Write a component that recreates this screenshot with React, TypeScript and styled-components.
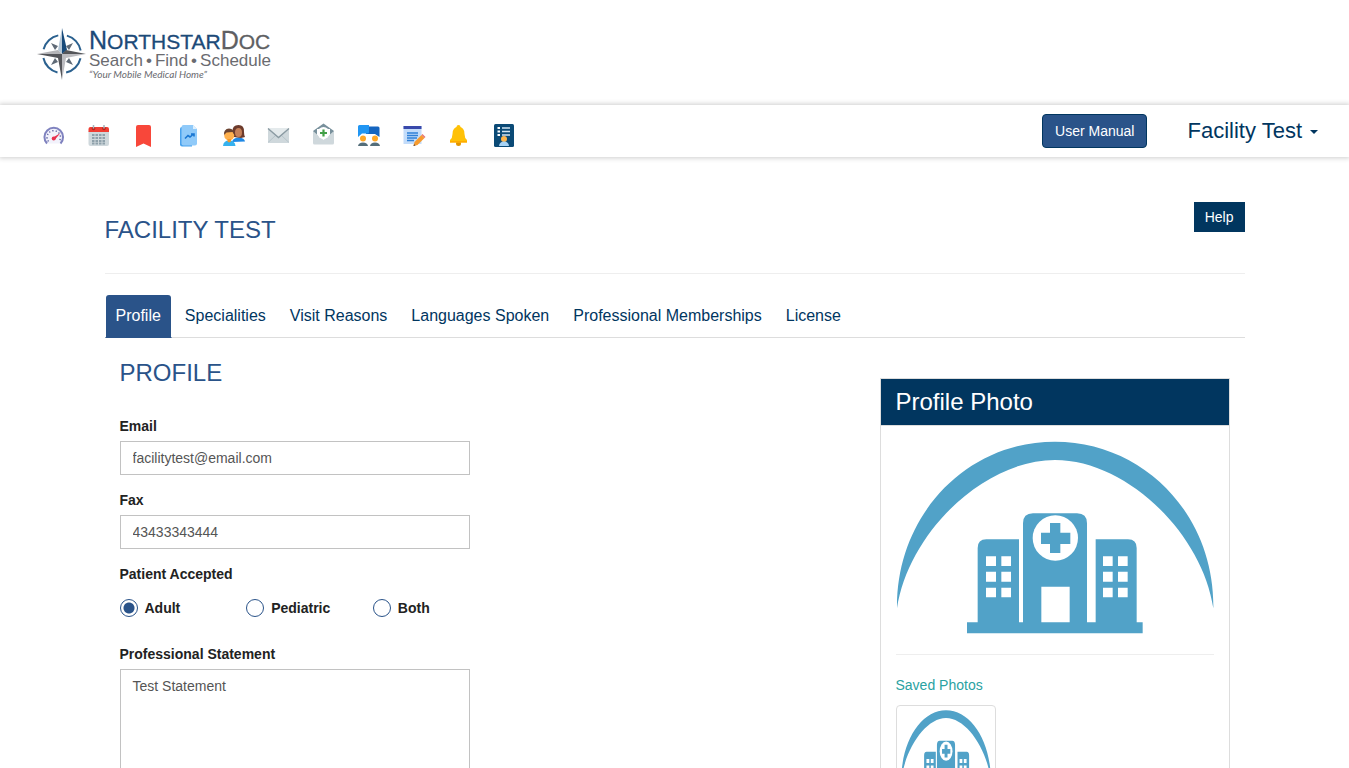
import React, { useState } from "react";
import styled, { createGlobalStyle } from "styled-components";

const navy = "#01365f";
const blue = "#2a5389";
const sky = "#51a2c8";

const GlobalStyle = createGlobalStyle`
  *, *::before, *::after { box-sizing: border-box; }
  body {
    margin: 0;
    background: #fff;
    color: #222;
    font: 14px/20px "Liberation Sans", Arial, sans-serif;
  }
  h1, h2, h3, ul, fieldset, legend { margin: 0; padding: 0; font-weight: 400; }
  fieldset { border: 0; min-width: 0; }
  button, input, textarea { font: inherit; }
  a { text-decoration: none; }
`;

const Header = styled.header`
  display: flex;
  align-items: center;
  height: 105px;
  padding: 3px 37px 0;
`;

const Brand = styled.a`
  display: flex;
  align-items: center;
  gap: 3px;
  color: #6a6b70;
`;

const BrandText = styled.div`
  display: flex;
  flex-direction: column;
  width: 182px;
`;

const BrandName = styled.div`
  font-size: 21px;
  line-height: 21px;
  color: #5e5f63;
  white-space: nowrap;
  -webkit-text-stroke: 0.3px currentColor;
`;

const BrandBlue = styled.span`
  color: #1c4a78;
`;

const BrandCap = styled.span`
  font-size: 25px;
`;

const BrandWords = styled.div`
  display: flex;
  justify-content: space-between;
  font-size: 17px;
  line-height: 17px;
`;

const BrandTag = styled.div`
  font: italic 10px/10px Lato, "Liberation Sans", sans-serif;
  white-space: nowrap;
`;

const Toolbar = styled.nav`
  display: flex;
  align-items: center;
  justify-content: space-between;
  height: 52px;
  padding: 0 31px 0 42px;
  background: #fff;
  box-shadow: 0 0 5px 1px rgba(0, 0, 0, 0.2);
`;

const IconList = styled.ul`
  display: flex;
  gap: 21px;
  padding-top: 8px;
  list-style: none;
`;

const IconLink = styled.a`
  display: block;
  svg { display: block; }
`;

const Account = styled.div`
  display: flex;
  align-items: center;
  gap: 40px;
`;

const ManualButton = styled.button`
  height: 34px;
  padding: 0 12px;
  border: 1px solid ${navy};
  border-radius: 4px;
  background: ${blue};
  color: #fff;
`;

const AccountButton = styled.button`
  display: flex;
  align-items: center;
  gap: 8px;
  padding: 0;
  border: 0;
  background: none;
  color: ${navy};
  font-size: 22px;
  line-height: 28px;
`;

const Caret = styled.span`
  margin-top: 2px;
  border: 4px solid transparent;
  border-top-color: currentColor;
  border-bottom: 0;
`;

const Main = styled.main`
  max-width: 1170px;
  margin: 0 auto;
  padding: 45px 15px 0;
`;

const TitleRow = styled.div`
  display: flex;
  justify-content: space-between;
  align-items: flex-start;
  height: 72px;
  border-bottom: 1px solid #eee;
`;

const Title = styled.h1`
  padding-top: 14px;
  font-size: 24px;
  line-height: 28px;
  color: ${blue};
`;

const HelpButton = styled.button`
  height: 30px;
  padding: 0 11px;
  border: 0;
  background: ${navy};
  color: #fff;
`;

const Tabs = styled.div`
  display: flex;
  gap: 2px;
  margin-top: 20px;
  border-bottom: 1px solid #ddd;
`;

const Tab = styled.button<{ $active: boolean }>`
  height: 44px;
  margin-bottom: -1px;
  padding: 0 10px;
  border: 1px solid transparent;
  border-bottom-color: ${(p) => (p.$active ? blue : "transparent")};
  border-radius: 4px 4px 0 0;
  background: ${(p) => (p.$active ? blue : "none")};
  background-clip: padding-box;
  color: ${(p) => (p.$active ? "#fff" : navy)};
  font-size: 16px;
`;

const Content = styled.div`
  display: grid;
  grid-template-columns: repeat(3, 1fr);
  column-gap: 30px;
  align-items: start;
  padding: 20px 15px 0;
`;

const Form = styled.form`
  display: flex;
  flex-direction: column;
  gap: 15px;
`;

const SectionTitle = styled.h2`
  margin-bottom: 13px;
  font-size: 24px;
  line-height: 30px;
  color: ${blue};
`;

const Field = styled.div`
  display: flex;
  flex-direction: column;
  gap: 5px;
`;

const Label = styled.label`
  font-weight: 700;
`;

const Input = styled.input`
  height: 34px;
  padding: 0 12px;
  border: 1px solid #c2c2c2;
  color: #555;
`;

const TextArea = styled.textarea`
  display: block;
  width: 100%;
  padding: 6px 12px;
  border: 1px solid #c2c2c2;
  color: #555;
  resize: none;
`;

const Legend = styled.legend`
  margin-bottom: 14px;
  font-weight: 700;
`;

const Radios = styled.div`
  display: grid;
  grid-template-columns: repeat(3, 1fr);
  margin-right: -30px;
  padding-bottom: 11px;
`;

const RadioLabel = styled.label`
  display: flex;
  align-items: center;
  gap: 7px;
  font-weight: 700;
`;

const Radio = styled.input`
  appearance: none;
  width: 18px;
  height: 18px;
  margin: 0;
  border: 1px solid ${blue};
  border-radius: 50%;
  &:checked { background: radial-gradient(circle, ${blue} 5px, #fff 6px); }
`;

const Panel = styled.section`
  grid-column: 3;
  margin-top: 20px;
  border: 1px solid #ddd;
`;

const PanelTitle = styled.h3`
  padding: 10px 15px;
  background: ${navy};
  color: #fff;
  font-size: 24px;
  line-height: 26px;
  border-bottom: 1px solid #ddd;
`;

const PanelBody = styled.div`
  padding: 15px;
`;

const Photo = styled.div`
  padding-bottom: 20px;
  border-bottom: 1px solid #eee;
  svg { display: block; width: 100%; height: auto; }
`;

const SavedTitle = styled.div`
  padding: 20px 0 10px;
  color: #2aa2a2;
`;

const Thumb = styled.button`
  display: flex;
  align-items: flex-start;
  width: 100px;
  height: 100px;
  padding: 4px;
  border: 1px solid #ddd;
  border-radius: 4px;
  background: #fff;
  svg { width: 90px; height: 82px; }
`;

const Compass = () => (
  <svg width="49" height="52" viewBox="0 0 49 52" aria-hidden="true">
    <circle cx="25" cy="26" r="19" fill="none" stroke="#2b618f" strokeWidth="2" strokeDasharray="21 8.845" strokeDashoffset="-4.420" />
    <path d="M14 15L21 18L18 22ZM36 15L29 18L32 22ZM14 37L21 34L18 30ZM36 37L29 34L32 30Z" fill="#5f6a76" />
    <path d="M25 0L21 22L25 26Z" fill="#b4c6d6" />
    <path d="M25 0L30 22L25 26Z" fill="#174a7a" />
    <path d="M0 26L21 22L25 26Z" fill="#b5b5b8" />
    <path d="M0 26L21 30L25 26ZM49 26L29 22L25 26ZM25 52L21 30L25 26Z" fill="#55565a" />
    <path d="M49 26L29 30L25 26ZM25 52L29 30L25 26Z" fill="#bcbcc0" />
  </svg>
);

const Hospital = ({ stretch = false }: { stretch?: boolean }) => (
  <svg viewBox="78 213 954 579" preserveAspectRatio={stretch ? "none" : undefined} aria-hidden="true">
    <g fill={sky}>
      <path d="M81 715C78 435 290 215 555 215C822 215 1034 435 1030 715C996 490 770 270 555 270C340 270 115 490 81 715Z" />
      <path d="M323 757V534Q323 508 349 508H447V757H459V460Q459 430 489 430H621Q651 430 651 460V757H677V508H774Q800 508 800 534V757H818V790H291V757Z" />
    </g>
    <circle cx="556" cy="504" r="68" fill="#fff" />
    <path d="M540 459H571V488H601V522H571V549H540V522H513V488H540Z" fill={sky} />
    <path
      fill="#fff"
      d="M514 650H599V757H514ZM348 559h30v29h-30zM394 559h29v29h-29zM348 605h30v30h-30zM394 605h29v30h-29zM348 653h30v29h-30zM394 653h29v29h-29zM699 559h29v29h-29zM744 559h29v29h-29zM699 605h29v30h-29zM744 605h29v30h-29zM699 653h29v29h-29zM744 653h29v29h-29z"
    />
  </svg>
);

const icons: { name: string; art: React.ReactNode }[] = [
  {
    name: "Dashboard",
    art: (
      <>
        <path d="M5 20.5A9.3 9.3 0 1 1 18.500 20.500" fill="#f2f2fb" stroke="#7f82bf" strokeWidth="2" />
        <path d="M6.500 18.500A6.700 6.700 0 1 1 17 18.500" fill="none" stroke="#6b6ea8" strokeWidth="1.500" strokeDasharray="1.300 2" />
        <path d="M11 14.500L18.500 10L13 16.500Z" fill="#e8314f" />
        <circle cx="11.700" cy="15.500" r="2" fill="#e8314f" />
      </>
    ),
  },
  {
    name: "Calendar",
    art: (
      <>
        <path d="M1.500 8H22V21Q22 23 20 23H3.500Q1.500 23 1.500 21Z" fill="#cfd8dc" />
        <path d="M1.500 9V6Q1.500 4 3.500 4H20Q22 4 22 6V9Z" fill="#f03d33" />
        <circle cx="6.500" cy="5.500" r="1.800" fill="#b3261e" />
        <circle cx="17" cy="5.500" r="1.800" fill="#b3261e" />
        <path d="M6.500 2V5.500M17 2V5.500" stroke="#a9b7be" strokeWidth="1.500" />
        <path d="M5 12h14M5 15h14M5 18h14M5 20.500h14" stroke="#8fa1ab" strokeWidth="2" strokeDasharray="2.500 1" />
      </>
    ),
  },
  { name: "Bookmarks", art: <path d="M4 4Q4 2 6 2H17Q19 2 19 4V24L11.500 20.500L4 24Z" fill="#f8473a" /> },
  {
    name: "Reports",
    art: (
      <>
        <path d="M3 6Q3 4 5 4H15V23.500H5Q3 23.500 3 21.500Z" fill="#49a3ee" />
        <path d="M4.500 4Q4.500 2 6.500 2H16L20 6V20.500Q20 22.500 18 22.500H6.500Q4.500 22.500 4.500 20.500Z" fill="#90caf9" />
        <path d="M16 2L20 6H16Z" fill="#dff0fd" />
        <path d="M8 15.500L11 12.500L13 14L16.500 11M14 11H17V13.500" fill="none" stroke="#1976d2" strokeWidth="1.600" />
      </>
    ),
  },
  {
    name: "Patients",
    art: (
      <>
        <path d="M10 19Q11 14.500 17 14.500Q22.500 15 23 18.500Z" fill="#1e88e5" />
        <path d="M10.500 9Q10 2 16.500 2Q22.500 2 22 9Q22 12 23 14L19 15L12 14Z" fill="#6d3b2c" />
        <ellipse cx="16.500" cy="9.500" rx="3.500" ry="4.500" fill="#c68058" />
        <path d="M1 23Q1.500 17.500 7 17.500Q13 17.500 13.500 23Z" fill="#35b2ef" />
        <circle cx="7.200" cy="12.500" r="5" fill="#ffb04c" />
        <path d="M2 12Q1.500 6 7 5.500Q12.500 6 12.400 12L10.500 9L4.500 9.500Z" fill="#6b4331" />
        <path d="M5.500 16H9V18.500L7 19.500L5.500 18.500Z" fill="#f59827" />
      </>
    ),
  },
  {
    name: "Messages",
    art: (
      <>
        <rect x="1" y="5" width="21" height="15" rx="1" fill="#cfd8dc" />
        <path d="M1 19.500L8.500 12.500M22 19.500L14.500 12.500" stroke="#b7c4ca" />
        <path d="M1 5H22L11.500 14.500Z" fill="#e4eaec" />
        <path d="M1 5.500L11.500 14.500L22 5.500" fill="none" stroke="#8b9ba3" strokeWidth="1.400" />
      </>
    ),
  },
  {
    name: "Medical mail",
    art: (
      <>
        <path d="M1 8L11.500 0.500L22 8V20H1Z" fill="#78909c" />
        <path d="M5 6H18V15L11.500 18.500L5 15Z" fill="#fff" />
        <path d="M1 8L11.500 17L22 8V20Q22 21.500 20.500 21.500H2.500Q1 21.500 1 20Z" fill="#cfd8dc" />
        <circle cx="11.500" cy="10" r="6" fill="#fff" />
        <path d="M11.500 6.500V13.500M8 10H15" stroke="#43a047" strokeWidth="2.200" />
      </>
    ),
  },
  {
    name: "Discussions",
    art: (
      <>
        <path d="M9 3.500H21Q22.500 3.500 22.500 5V14L18 11H9Z" fill="#1565c0" />
        <path d="M1 3.500Q1 2 2.500 2H12V9Q12 10.500 10.500 10.500H5L1 14Z" fill="#2196f3" />
        <circle cx="6" cy="15.500" r="3" fill="#ffa726" />
        <circle cx="18" cy="15.500" r="3" fill="#ffa726" />
        <path d="M1 23Q1.500 19.500 6 19.500Q10.500 19.500 11 23ZM13 23Q13.500 19.500 18 19.500Q22.500 19.500 23 23Z" fill="#546e7a" />
      </>
    ),
  },
  {
    name: "Notes",
    art: (
      <>
        <rect x="1.500" y="3" width="18" height="18" fill="#c3dcfa" />
        <rect x="1.500" y="3" width="18" height="3" fill="#3949ab" />
        <path d="M5 10H16M5 12.500H16M5 15H15M5 17.500H12" stroke="#2f80d8" strokeWidth="1.500" />
        <path d="M12.500 19L19.500 12L22.500 15L15.500 22L11.500 23Z" fill="#f79b2e" />
        <path d="M19.500 12L20.500 11L23.500 14L22.500 15Z" fill="#e57373" />
        <path d="M12 21L13.500 22.500L11.500 23Z" fill="#5d4037" />
      </>
    ),
  },
  {
    name: "Notifications",
    art: (
      <>
        <circle cx="11.500" cy="20.500" r="2.500" fill="#e29500" />
        <circle cx="11.500" cy="4" r="2" fill="#ffc107" />
        <path d="M11.500 3.500Q17.500 4 17.500 11Q17.500 15 20 17V19.500H3V17Q5.500 15 5.500 11Q5.500 4 11.500 3.500Z" fill="#ffc107" />
        <path d="M3 18H20V19.500H3Z" fill="#ffab00" />
      </>
    ),
  },
  {
    name: "Directory",
    art: (
      <>
        <rect x="2" y="1" width="20" height="23" rx="1.500" fill="#0b4a76" />
        <path d="M5.500 5H8M5.500 8.500H8M5.500 12H8" stroke="#fff" strokeWidth="1.800" />
        <path d="M10 5H18M10 8.500H18M10 12H18" stroke="#d4e6f3" strokeWidth="1.600" />
        <circle cx="12" cy="16" r="3" fill="#ffb64c" />
        <path d="M7 23Q7.500 18.500 12 18.500Q16.500 18.500 17 23Z" fill="#a7d3f5" />
      </>
    ),
  },
];

const tabs = ["Profile", "Specialities", "Visit Reasons", "Languages Spoken", "Professional Memberships", "License"];
const patientTypes = ["Adult", "Pediatric", "Both"];

export default function App() {
  const [tab, setTab] = useState("Profile");
  return (
    <>
      <GlobalStyle />
      <Header>
        <Brand href="#home">
          <Compass />
          <BrandText>
            <BrandName>
              <BrandBlue><BrandCap>N</BrandCap>ORTHSTAR</BrandBlue><BrandCap>D</BrandCap>OC
            </BrandName>
            <BrandWords>
              <span>Search</span><span>•</span><span>Find</span><span>•</span><span>Schedule</span>
            </BrandWords>
            <BrandTag>“Your Mobile Medical Home”</BrandTag>
          </BrandText>
        </Brand>
      </Header>
      <Toolbar>
        <IconList>
          {icons.map((icon) => (
            <li key={icon.name}>
              <IconLink href={`#${icon.name}`} aria-label={icon.name}>
                <svg width="24" height="24" viewBox="0 0 24 24" aria-hidden="true">{icon.art}</svg>
              </IconLink>
            </li>
          ))}
        </IconList>
        <Account>
          <ManualButton type="button">User Manual</ManualButton>
          <AccountButton type="button">Facility Test<Caret /></AccountButton>
        </Account>
      </Toolbar>
      <Main>
        <TitleRow>
          <Title>FACILITY TEST</Title>
          <HelpButton type="button">Help</HelpButton>
        </TitleRow>
        <Tabs role="tablist">
          {tabs.map((name) => (
            <Tab key={name} type="button" role="tab" aria-selected={tab === name} $active={tab === name} onClick={() => setTab(name)}>
              {name}
            </Tab>
          ))}
        </Tabs>
        <Content>
          <Form>
            <SectionTitle>PROFILE</SectionTitle>
            <Field>
              <Label htmlFor="email">Email</Label>
              <Input id="email" type="email" defaultValue="facilitytest@email.com" />
            </Field>
            <Field>
              <Label htmlFor="fax">Fax</Label>
              <Input id="fax" defaultValue="43433343444" />
            </Field>
            <fieldset>
              <Legend>Patient Accepted</Legend>
              <Radios>
                {patientTypes.map((type, i) => (
                  <RadioLabel key={type}>
                    <Radio type="radio" name="patients" defaultChecked={i === 0} />
                    {type}
                  </RadioLabel>
                ))}
              </Radios>
            </fieldset>
            <Field>
              <Label htmlFor="statement">Professional Statement</Label>
              <TextArea id="statement" rows={6} defaultValue="Test Statement" />
            </Field>
          </Form>
          <Panel>
            <PanelTitle>Profile Photo</PanelTitle>
            <PanelBody>
              <Photo><Hospital /></Photo>
              <SavedTitle>Saved Photos</SavedTitle>
              <Thumb type="button" aria-label="Saved photo"><Hospital stretch /></Thumb>
            </PanelBody>
          </Panel>
        </Content>
      </Main>
    </>
  );
}
